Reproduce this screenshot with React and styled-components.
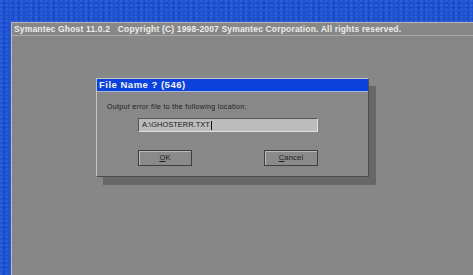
import React from 'react'
import styled, { createGlobalStyle } from 'styled-components'

const Global = createGlobalStyle`
  html, body {
    margin: 0;
    padding: 0;
    width: 473px;
    height: 275px;
    overflow: hidden;
    background: #1d52d3;
  }
  body {
    font-family: "Liberation Sans", Arial, sans-serif;
  }
`

const Desktop = styled.div`
  width: 473px;
  height: 275px;
  box-sizing: border-box;
  padding: 22px 0 0 11px;
  background-color: #1d52d3;
  background-image:
    radial-gradient(circle at 20% 30%, rgba(120,160,255,0.18) 0 1px, transparent 2px),
    radial-gradient(circle at 70% 60%, rgba(0,0,60,0.14) 0 1px, transparent 2px);
  background-size: 5px 4px, 7px 5px;
`

const Window = styled.div`
  height: 100%;
  box-sizing: border-box;
  background: #878787;
  border-top: 1px solid #b9b9b9;
  border-left: 1px solid #b9b9b9;
  display: flex;
  flex-direction: column;
`

const Header = styled.div`
  height: 11px;
  padding: 1px 0 0 2px;
  border-bottom: 1px solid #a9a9a9;
  color: #ececec;
  font-size: 8.5px;
  font-weight: bold;
  line-height: 10px;
  white-space: pre;
  letter-spacing: 0.17px;
`

const Stage = styled.div`
  flex: 1;
  padding: 42px 0 0 84px;
`

const Dialog = styled.div`
  width: 273px;
  height: 99px;
  box-sizing: border-box;
  background: #888888;
  border-top: 1px solid #c4c4c4;
  border-left: 1px solid #c4c4c4;
  border-right: 1px solid #4c4c4c;
  border-bottom: 1px solid #4c4c4c;
  box-shadow: 7px 8px 0 #676767;
  display: flex;
  flex-direction: column;
`

const TitleBar = styled.div`
  height: 12px;
  background: #0b42dd;
  color: #f2f2f2;
  font-size: 9.5px;
  font-weight: bold;
  line-height: 12px;
  padding-left: 2px;
  border-bottom: 1px solid #a8b6d8;
  letter-spacing: 0.5px;
`

const Body = styled.div`
  padding: 10px 0 0 10px;
  display: flex;
  flex-direction: column;
`

const Prompt = styled.div`
  color: #1c1c1c;
  font-size: 7px;
  line-height: 9px;
  letter-spacing: 0.33px;
`

const Field = styled.div`
  margin: 7px 0 0 31px;
  width: 180px;
  height: 14px;
  box-sizing: border-box;
  background: #bcbcbc;
  border-top: 1px solid #555;
  border-left: 1px solid #555;
  border-right: 1px solid #e0e0e0;
  border-bottom: 1px solid #e0e0e0;
  color: #1a1a1a;
  font-size: 7.5px;
  line-height: 12px;
  padding-left: 3px;
  display: flex;
  align-items: center;
`

const Caret = styled.span`
  display: inline-block;
  width: 1px;
  height: 9px;
  background: #111;
  margin-left: 1px;
`

const Buttons = styled.div`
  display: flex;
  gap: 72px;
  margin: 18px 0 0 31px;
`

const Button = styled.div`
  width: 54px;
  height: 16px;
  box-sizing: border-box;
  border: 1px solid #3e3e3e;
  box-shadow: inset 1px 1px 0 #b8b8b8;
  background: #8a8a8a;
  color: #1e1e1e;
  font-size: 7.5px;
  line-height: 14px;
  text-align: center;
  letter-spacing: 0.2px;
  u {
    text-decoration: underline;
    text-underline-offset: 1px;
  }
`

export default function App() {
  return (
    <>
      <Global />
      <Desktop>
        <Window>
          <Header>{'Symantec Ghost 11.0.2   Copyright (C) 1998-2007 Symantec Corporation. All rights reserved.'}</Header>
          <Stage>
            <Dialog>
              <TitleBar>File Name ? (546)</TitleBar>
              <Body>
                <Prompt>Output error file to the following location:</Prompt>
                <Field>A:\GHOSTERR.TXT<Caret /></Field>
                <Buttons>
                  <Button><u>O</u>K</Button>
                  <Button><u>C</u>ancel</Button>
                </Buttons>
              </Body>
            </Dialog>
          </Stage>
        </Window>
      </Desktop>
    </>
  )
}
